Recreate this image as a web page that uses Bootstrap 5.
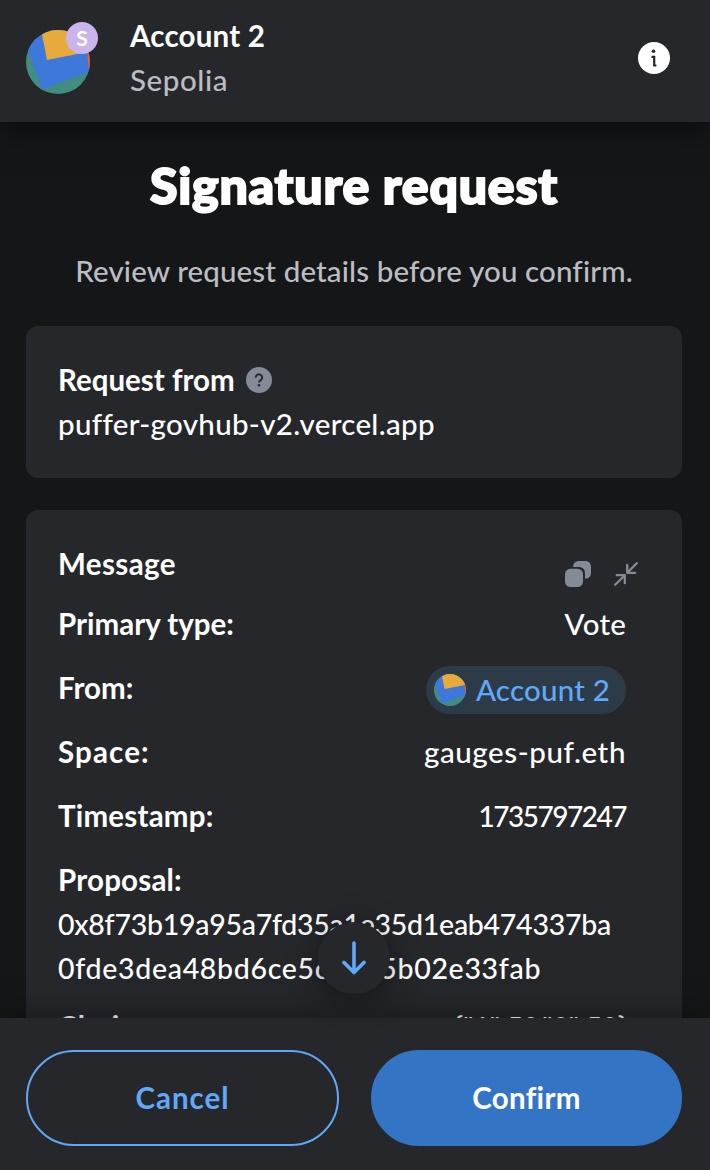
<!DOCTYPE html>
<html lang="en" data-bs-theme="dark">
<head>
<meta charset="utf-8">
<meta name="viewport" content="width=device-width, initial-scale=1">
<title>Signature request</title>
<link href="https://cdn.jsdelivr.net/npm/bootstrap@5.3.0/dist/css/bootstrap.min.css" rel="stylesheet">
<style>
body{background:#151618;color:#fff;font:500 29.5px/44px Lato,"Liberation Sans",sans-serif;letter-spacing:.2px;font-variant-ligatures:none;height:1170px;overflow:hidden}
.panel{background:#26272b}
.strong{font-weight:700}
.wallet-head{height:122px;padding:14px 40px 0 26px;box-shadow:0 4px 32px rgba(0,0,0,.6);z-index:2}
.avatar-wrap{width:72px;height:72px;margin-top:8px;margin-right:32px}
.net{width:32px;height:32px;top:0;right:0;background:#c9b4ec;font-size:21px;line-height:32px;letter-spacing:0;font-weight:700}
.info{margin-top:28px}
.muted{color:#bbbdc3}
.title{font-size:50px;line-height:64px;font-weight:900;margin-top:31px;padding-right:2px;letter-spacing:.8px;-webkit-text-stroke:2px #fff}
.sub{margin-top:32px;margin-bottom:33px;padding-right:2px;letter-spacing:.13px}
.box{border-radius:12px;padding:32px;margin:0 28px 32px 26px}
.message-head{height:44px;padding-right:12px;margin-bottom:16px}
.icons{gap:23px;padding-top:19px}
.help{margin-left:11px}
.field{height:44px;margin-bottom:20px;padding-right:24px}
.field.tail{margin-top:15px}
.chip{height:48px;padding:0 16px 0 8px;background:#2d3b48;color:#60a9fa;gap:10px}
.scroll{min-height:0;overflow:hidden}
.wallet-foot{height:152px;padding:32px 28px 0 26px;gap:32px;box-shadow:0 -4px 32px rgba(0,0,0,.35);z-index:2}
.act,.act:hover{height:96px;width:313px;border-radius:48px;border:2px solid #60a9fa;font-size:29.5px;font-weight:700;color:#60a9fa;padding:0;letter-spacing:.95px}
.act-go,.act-go:hover{width:311px;background:#3375c4;border-color:#3375c4;color:#fff;letter-spacing:.3px}
.down{width:72px;height:72px;left:318px;bottom:176px;z-index:3;box-shadow:0 4px 32px rgba(0,0,0,.45)}
.hash{font-size:28.5px}
.hash-a{letter-spacing:-.27px}
.hash-b{letter-spacing:.69px}
.ls-0{letter-spacing:0}
.ls-sm{letter-spacing:.32px}
.ls-md{letter-spacing:.4px}
.ls-lg{letter-spacing:.6px}
.ls-xl{letter-spacing:1.15px}
.ls-num{font-size:28px;letter-spacing:-1.5px}
.ls-tight{font-size:28px;letter-spacing:-.2px}
</style>
</head>
<body class="d-flex flex-column position-relative">
<svg width="0" height="0" class="position-absolute">
<defs><clipPath id="round"><circle cx="32" cy="32" r="32"/></clipPath>
<symbol id="face" viewBox="0 0 64 64"><g clip-path="url(#round)"><path fill="#418e80" d="M0 0h64v64H0z"/><path fill="#f25d20" d="M58 16h8v24l-4-1z"/><path fill="#3f78db" d="M-8-5 50-22 61 20 63 42 16.500 59.500z"/><path fill="#e9aa3c" d="M12-16 66-30 72 20 21 30z"/></g></symbol></defs></svg>

<header class="wallet-head panel d-flex position-relative flex-shrink-0">
  <div class="avatar-wrap position-relative">
    <svg width="64" height="64" class="d-block mt-2"><use href="#face"/></svg>
    <span class="net rounded-circle position-absolute text-center">S</span>
  </div>
  <div class="flex-grow-1"><div class="strong">Account 2</div><div class="muted ls-lg">Sepolia</div></div>
  <svg width="32" height="32" class="info flex-shrink-0"><circle cx="16" cy="16" r="16" fill="#fff"/><circle cx="15.500" cy="9.300" r="1.800" fill="#26272b"/><path d="M13.500 14.800h2.700v8.700h2.200" fill="none" stroke="#26272b" stroke-width="2.200"/></svg>
</header>

<main class="scroll flex-grow-1">
  <h1 class="title text-center mb-0">Signature request</h1>
  <p class="sub muted text-center">Review request details before you confirm.</p>
  <section class="box panel">
    <div class="strong d-flex align-items-center ls-0">Request from
      <svg width="26" height="26" class="help" viewBox="0 0 26 26"><circle cx="13" cy="13" r="13" fill="#858b96"/><path d="M9.800 10.600a3.200 3.200 0 1 1 5 2.500c-1.200.8-1.800 1.200-1.800 2.500" fill="none" stroke="#26272b" stroke-width="2"/><circle cx="13" cy="18.300" r="1.300" fill="#26272b"/></svg>
    </div>
    <div class="ls-sm">puffer-govhub-v2.vercel.app</div>
  </section>

  <section class="box panel">
    <div class="message-head d-flex justify-content-between">
      <div class="strong ls-md">Message</div>
      <div class="icons d-flex">
        <svg width="26" height="26" viewBox="0 0 26 26" fill="#858b96"><rect y="7.700" width="18" height="18.300" rx="5.500"/><path d="M8 6C8.500 2 10.500 0 14.500 0h5C24 0 26 2 26 6.500v5c0 4-2 6-6 6.300V13c0-5-2-7-7-7z"/></svg>
        <svg width="24" height="26" viewBox="0 -1 24 26" fill="none" stroke="#858b96" stroke-width="2.300" stroke-linecap="round" stroke-linejoin="round"><path d="M22.800 1.200 13.200 10.800M13.200 2.800v8h8M1.200 22.800l9.600-9.600M2.800 13.200h8v8"/></svg>
      </div>
    </div>
    <div class="field d-flex justify-content-between"><span class="strong ls-0">Primary type:</span><span>Vote</span></div>
    <div class="field d-flex justify-content-between"><span class="strong ls-0">From:</span>
      <span class="chip rounded-pill d-flex align-items-center"><svg width="32" height="32"><use href="#face"/></svg>Account 2</span></div>
    <div class="field d-flex justify-content-between"><span class="strong ls-xl">Space:</span><span class="ls-lg">gauges-puf.eth</span></div>
    <div class="field d-flex justify-content-between"><span class="strong">Timestamp:</span><span class="ls-num">1735797247</span></div>
    <div class="strong">Proposal:</div>
    <div class="hash hash-a">0x8f73b19a95a7fd35a1e35d1eab474337ba</div>
    <div class="hash hash-b">0fde3dea48bd6ce5c7d45b02e33fab</div>
    <div class="field tail d-flex justify-content-between"><span class="strong">Choice:</span><span class="ls-tight">{"1":50,"2":50}</span></div>
  </section>
</main>

<span class="down panel rounded-circle position-absolute d-flex align-items-center justify-content-center">
  <svg width="24" height="34" viewBox="0 0 24 34" fill="none" stroke="#60a9fa" stroke-width="3.600" stroke-linecap="round" stroke-linejoin="round"><path d="M12 2v29.500M2 21.500l10 10 10-10"/></svg>
</span>
<footer class="wallet-foot panel d-flex position-relative flex-shrink-0">
  <button class="btn act">Cancel</button>
  <button class="btn act act-go">Confirm</button>
</footer>
<script src="https://cdn.jsdelivr.net/npm/bootstrap@5.3.0/dist/js/bootstrap.bundle.min.js"></script>
</body>
</html>
